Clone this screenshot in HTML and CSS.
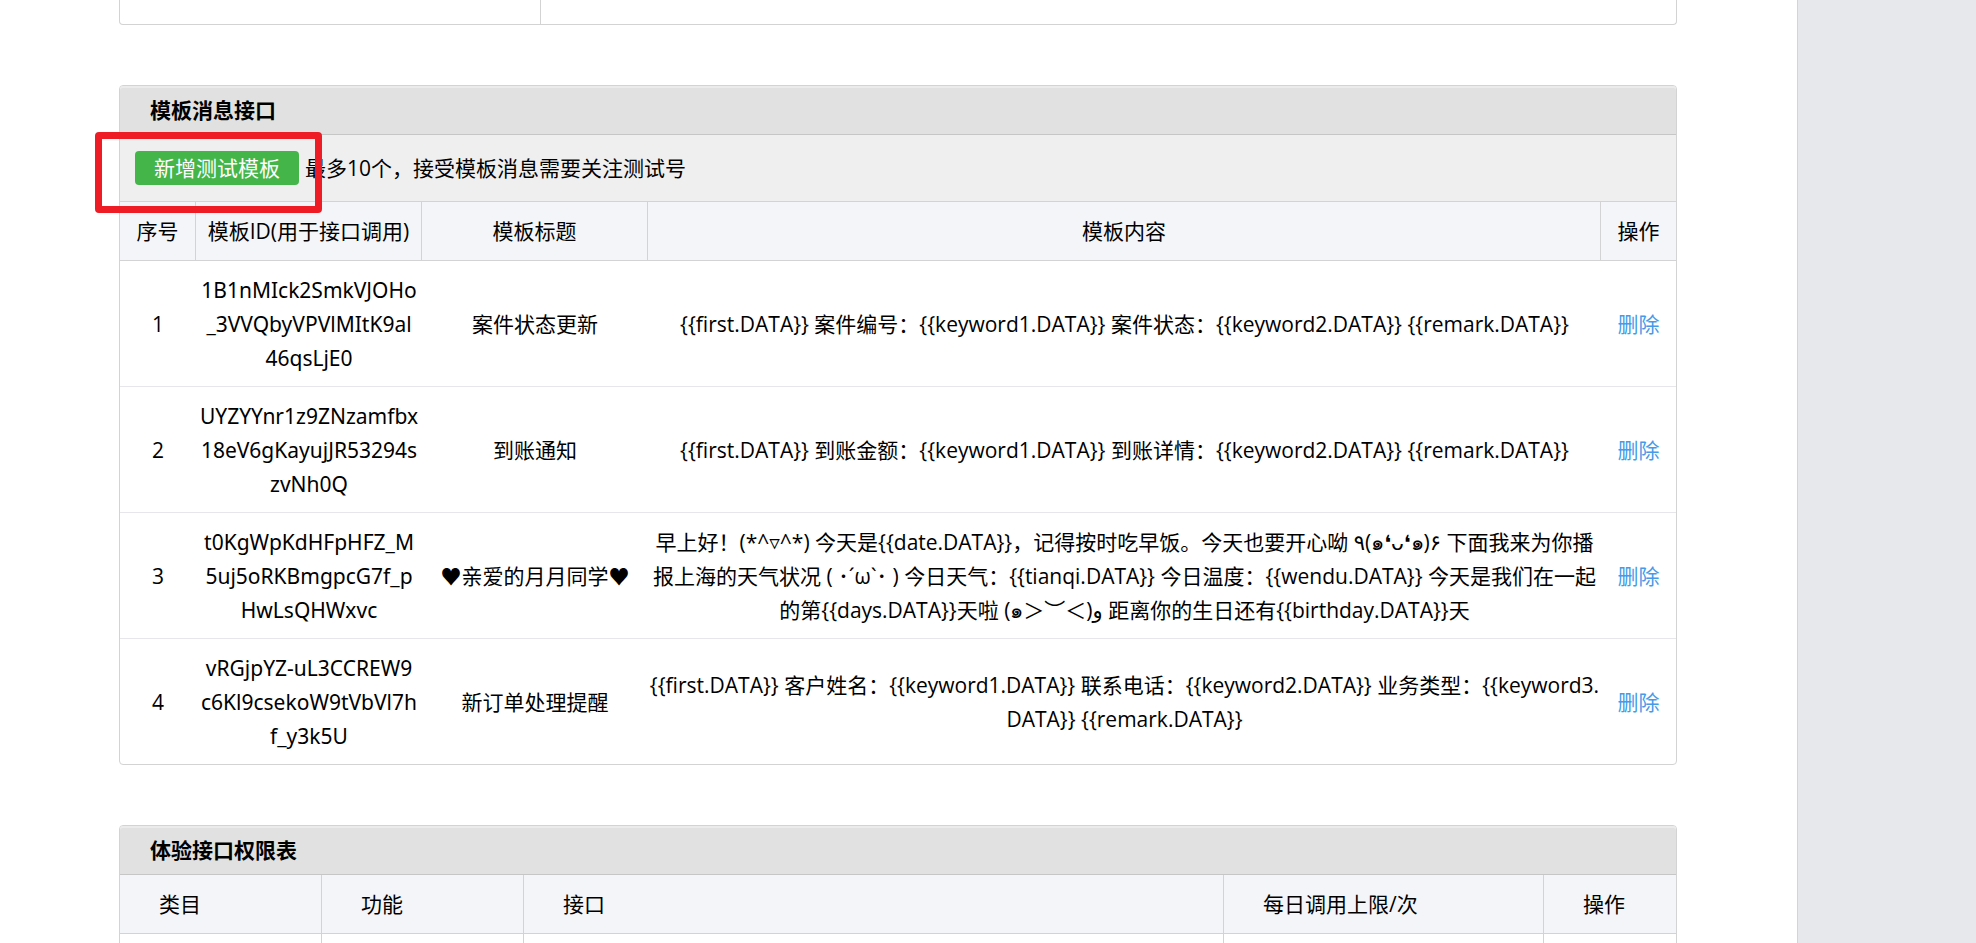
FILE: index.html
```html
<!DOCTYPE html>
<html lang="zh-CN">
<head>
<meta charset="utf-8">
<title>测试号管理</title>
<link rel="stylesheet" href="styles.css">
</head>
<body>
<div class="page">
<main class="main">
  <section class="panel panel-tail">
    <div class="tail-label"></div>
    <div class="tail-value"></div>
  </section>

  <section class="panel">
    <h2 class="panel-title">模板消息接口</h2>
    <div class="toolbar">
      <button class="btn" type="button">新增测试模板</button>
      <span>最多10个，接受模板消息需要关注测试号</span>
      <div class="highlight"></div>
    </div>
    <table class="table templates">
      <colgroup><col class="c-num"><col class="c-id"><col class="c-id"><col><col class="c-action"></colgroup>
      <thead>
        <tr><th>序号</th><th>模板ID(用于接口调用)</th><th>模板标题</th><th>模板内容</th><th>操作</th></tr>
      </thead>
      <tbody>
        <tr>
          <td>1</td>
          <td class="template-id">1B1nMIck2SmkVJOHo<br>_3VVQbyVPVlMItK9al<br>46qsLjE0</td>
          <td>案件状态更新</td>
          <td>{{first.DATA}} 案件编号：{{keyword1.DATA}} 案件状态：{{keyword2.DATA}} {{remark.DATA}}</td>
          <td><a href="#">删除</a></td>
        </tr>
        <tr>
          <td>2</td>
          <td class="template-id">UYZYYnr1z9ZNzamfbx<br>18eV6gKayujJR53294s<br>zvNh0Q</td>
          <td>到账通知</td>
          <td>{{first.DATA}} 到账金额：{{keyword1.DATA}} 到账详情：{{keyword2.DATA}} {{remark.DATA}}</td>
          <td><a href="#">删除</a></td>
        </tr>
        <tr>
          <td>3</td>
          <td class="template-id">t0KgWpKdHFpHFZ_M<br>5uj5oRKBmgpcG7f_p<br>HwLsQHWxvc</td>
          <td>♥亲爱的月月同学♥</td>
          <td>早上好！(*^▿^*) 今天是{{date.DATA}}，记得按时吃早饭。今天也要开心呦 ٩(๑❛ᴗ❛๑)۶ 下面我来为你播<br>报上海的天气状况 ( ･´ω`･ ) 今日天气：{{tianqi.DATA}} 今日温度：{{wendu.DATA}} 今天是我们在一起<br>的第{{days.DATA}}天啦 (๑＞︶＜)و 距离你的生日还有{{birthday.DATA}}天</td>
          <td><a href="#">删除</a></td>
        </tr>
        <tr>
          <td>4</td>
          <td class="template-id">vRGjpYZ-uL3CCREW9<br>c6Kl9csekoW9tVbVl7h<br>f_y3k5U</td>
          <td>新订单处理提醒</td>
          <td>{{first.DATA}} 客户姓名：{{keyword1.DATA}} 联系电话：{{keyword2.DATA}} 业务类型：{{keyword3.<br>DATA}} {{remark.DATA}}</td>
          <td><a href="#">删除</a></td>
        </tr>
      </tbody>
    </table>
  </section>

  <section class="panel">
    <h2 class="panel-title">体验接口权限表</h2>
    <table class="table limits">
      <colgroup><col class="c-cat"><col class="c-cat"><col><col class="c-limit"><col class="c-op"></colgroup>
      <thead>
        <tr><th>类目</th><th>功能</th><th>接口</th><th>每日调用上限/次</th><th>操作</th></tr>
      </thead>
      <tbody>
        <tr><td></td><td></td><td></td><td></td><td></td></tr>
      </tbody>
    </table>
  </section>
</main>
<aside class="gutter"></aside>
</div>
</body>
</html>
```
FILE: styles.css
```css
* {
  box-sizing: border-box;
}

body {
  margin: 0;
  background: #fff;
  color: #000;
  font-family: "Open Sans", "Noto Sans CJK SC", "DejaVu Sans", sans-serif;
  font-size: 21px;
  line-height: 34px;
}

.page {
  display: flex;
  height: 100vh;
  overflow: hidden;
}

.main {
  flex: 1;
  min-width: 0;
  padding: 0 120px 0 119px;
}

.gutter {
  flex: 0 0 179px;
  background: #e7e8eb;
  border-left: 1px solid #d3d4d6;
}

.panel {
  margin-bottom: 60px;
  border: 1px solid #d3d3d3;
  border-radius: 4px;
}

.panel:last-child {
  margin-bottom: 0;
}

.panel-tail {
  display: flex;
  height: 25px;
  border-top: 0;
  border-radius: 0 0 4px 4px;
}

.tail-label {
  flex: 27;
  border-right: 1px solid #d3d3d3;
}

.tail-value {
  flex: 73;
}

.panel-title {
  margin: 0;
  padding: 7px 30px;
  border-bottom: 1px solid #c6c6c6;
  border-radius: 3px 3px 0 0;
  background: #e1e1e1;
  box-shadow: inset 0 2px 0 #ebebeb;
  font-size: 21px;
  line-height: 34px;
  font-weight: 700;
}

.toolbar {
  position: relative;
  display: flex;
  align-items: flex-end;
  gap: 6px;
  padding: 16px 15px;
  border-bottom: 1px solid #d3d3d3;
  background: #efefef;
}

.btn {
  padding: 0 19px;
  border: 0;
  border-radius: 4px;
  background: #44b549;
  color: #fff;
  font: inherit;
}

.highlight {
  position: absolute;
  top: -3px;
  left: -25px;
  width: 227px;
  height: 81px;
  border: 7px solid #ee1c24;
  border-radius: 4px;
}

.table {
  width: 100%;
  table-layout: fixed;
  border-collapse: separate;
  border-spacing: 0;
}

.table th {
  padding: 12px 0;
  border-right: 1px solid #d3d3d3;
  border-bottom: 1px solid #d3d3d3;
  background: #f4f5f9;
  font-weight: 400;
  white-space: nowrap;
}

.table tr > :last-child {
  border-right: 0;
}

.templates td {
  padding: 12px 0 11px;
  border-bottom: 1px solid #e7e7eb;
  text-align: center;
  white-space: nowrap;
}

.templates .template-id {
  font-family: "Noto Sans", "Open Sans", sans-serif;
}

.templates tr:last-child td {
  border-bottom: 0;
}

.templates a {
  color: #459ae9;
  text-decoration: none;
}

.limits th {
  padding-left: 39px;
  text-align: left;
}

.limits td {
  height: 60px;
  border-right: 1px solid #d3d3d3;
}

.c-num {
  width: 76px;
}

.c-action {
  width: 75px;
}

.c-id {
  width: 226px;
}

.c-cat {
  width: 202px;
}

.c-limit {
  width: 320px;
}

.c-op {
  width: 132px;
}
```
